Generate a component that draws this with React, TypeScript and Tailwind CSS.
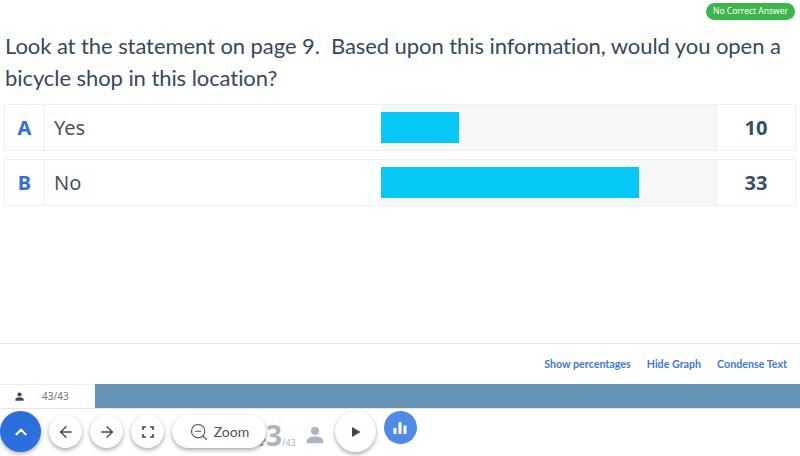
import { ArrowLeft, ArrowRight, ChevronUp, ZoomOut } from "lucide-react"

const answers = [
    { letter: "A", label: "Yes", count: 10, bar: "w-[78px]" },
    { letter: "B", label: "No", count: 33, bar: "w-[258px]" },
]

function PersonIcon({ className }: { className: string }) {
    return (
        <svg viewBox="0 0 24 24" className={className} fill="currentColor">
            <circle cx="12" cy="7.5" r="4.5" />
            <path d="M3 21v-2.5C3 15 8.5 13.6 12 13.6s9 1.4 9 4.9V21z" />
        </svg>
    )
}

function CornersIcon() {
    return (
        <svg viewBox="0 0 12 12" className="size-3 text-[#34495e]" fill="none" stroke="currentColor" strokeWidth="1.6">
            <path d="M1 4V1h3M8 1h3v3M11 8v3H8M4 11H1V8" />
        </svg>
    )
}

function BarsIcon() {
    return (
        <svg viewBox="0 0 14 14" className="size-[14px]" fill="currentColor">
            <rect x="0.5" y="7" width="3" height="6" />
            <rect x="5.5" y="1" width="3" height="12" />
            <rect x="10.5" y="4.5" width="3" height="8.5" />
        </svg>
    )
}

function PlayIcon() {
    return (
        <svg viewBox="0 0 10 10" className="ml-[2px] size-[10px] text-[#34495e]" fill="currentColor">
            <path d="M1 0l8.5 5L1 10z" />
        </svg>
    )
}

function RoundButton({ children }: { children: React.ReactNode }) {
    return (
        <div className="flex size-[33px] items-center justify-center rounded-full bg-white shadow-[0_2px_4px_rgba(0,0,0,0.35)]">
            {children}
        </div>
    )
}

export default function App() {
    return (
        <div className="relative flex h-[456px] w-[800px] flex-col overflow-hidden bg-white font-['Noto_Sans',sans-serif] text-[#34495e]">
            <div className="flex justify-end pr-[5px] pt-[3px]">
                <span className="flex h-[17px] w-[89px] items-center justify-center rounded-full bg-[#3cb54a] text-[8.5px] text-white">
                    No Correct Answer
                </span>
            </div>
            <h1 className="mt-[10px] px-[5px] font-['Lato',sans-serif] text-[22px] leading-[32px] tracking-[-0.07px] text-[#34495e]">
                Look at the statement on page 9.&nbsp; Based upon this information, would you open a bicycle shop in this location?
            </h1>

            <div className="mt-[10px] flex flex-col gap-2 pl-1 pr-[4px]">
                {answers.map((a) => (
                    <div key={a.letter} className="flex h-[47px] border border-[#f0f0f0]">
                        <div className="flex w-10 items-center justify-center border-r border-[#f0f0f0] text-[20px] font-bold text-[#2f6fde]">
                            {a.letter}
                        </div>
                        <div className="flex w-[336px] items-center pl-[9px] text-[20px] text-[#46535f]">{a.label}</div>
                        <div className="flex w-[335px] items-center bg-[#f7f7f7]">
                            <div className={`h-[31px] bg-[#06c8f7] ${a.bar}`} />
                        </div>
                        <div className="flex flex-1 items-center justify-center border-l border-[#f0f0f0] text-[20px] font-bold text-[#34506b]">
                            {a.count}
                        </div>
                    </div>
                ))}
            </div>

            <div className="mt-auto border-t border-[#e6e6e6]">
                <div className="flex h-10 items-center justify-end gap-4 pr-[13px] font-['Lato',sans-serif] text-[10.7px] font-bold text-[#3f78d8]">
                    <span>Show percentages</span>
                    <span>Hide Graph</span>
                    <span>Condense Text</span>
                </div>
                <div className="flex h-[25px] border-b border-[#e6e6e6]">
                    <div className="flex w-[95px] items-center border-t border-[#eeeeee] pl-[14px] text-[10px] text-[#6b7680]">
                        <PersonIcon className="size-[11px] text-[#34495e]" />
                        <span className="ml-[17px]">43/43</span>
                    </div>
                    <div className="flex-1 bg-[#6593b3]" />
                </div>
                <div className="h-[47px]" />
            </div>

            {/* floating toolbar */}
            <div className="absolute bottom-[4px] left-0 flex h-[41px] items-center">
                <div className="flex size-[41px] items-center justify-center rounded-full bg-[#2a6fdb] text-white shadow-[0_2px_4px_rgba(0,0,0,0.3)]">
                    <ChevronUp className="size-[18px]" strokeWidth={3} />
                </div>
                <div className="ml-2 flex gap-2">
                    <RoundButton><ArrowLeft className="size-[18px] text-[#34495e]" strokeWidth={1.8} /></RoundButton>
                    <RoundButton><ArrowRight className="size-[18px] text-[#34495e]" strokeWidth={1.8} /></RoundButton>
                    <RoundButton><CornersIcon /></RoundButton>
                </div>
                <div className="relative z-10 ml-2 flex h-[33px] w-[94px] items-center justify-center gap-[5px] rounded-full bg-white font-['Lato',sans-serif] text-[14px] text-[#46535f] shadow-[0_2px_4px_rgba(0,0,0,0.35)]">
                    <ZoomOut className="size-[20px]" strokeWidth={1.3} />
                    Zoom
                </div>
                <div className="-ml-[16px] mt-[8px] flex items-baseline text-[#a9b5c0]">
                    <span className="text-[28px] font-bold leading-none">43</span>
                    <span className="text-[9px]">/43</span>
                </div>
                <PersonIcon className="ml-[8px] mt-[7px] size-[22px] text-[#a9b5c0]" />
                <div className="ml-[9px] flex size-[41px] items-center justify-center rounded-full bg-white shadow-[0_2px_4px_rgba(0,0,0,0.35)]">
                    <PlayIcon />
                </div>
                <div className="mb-2 ml-2 flex size-[33px] items-center justify-center rounded-full bg-[#4f8ae6] text-white">
                    <BarsIcon />
                </div>
            </div>
        </div>
    )
}
